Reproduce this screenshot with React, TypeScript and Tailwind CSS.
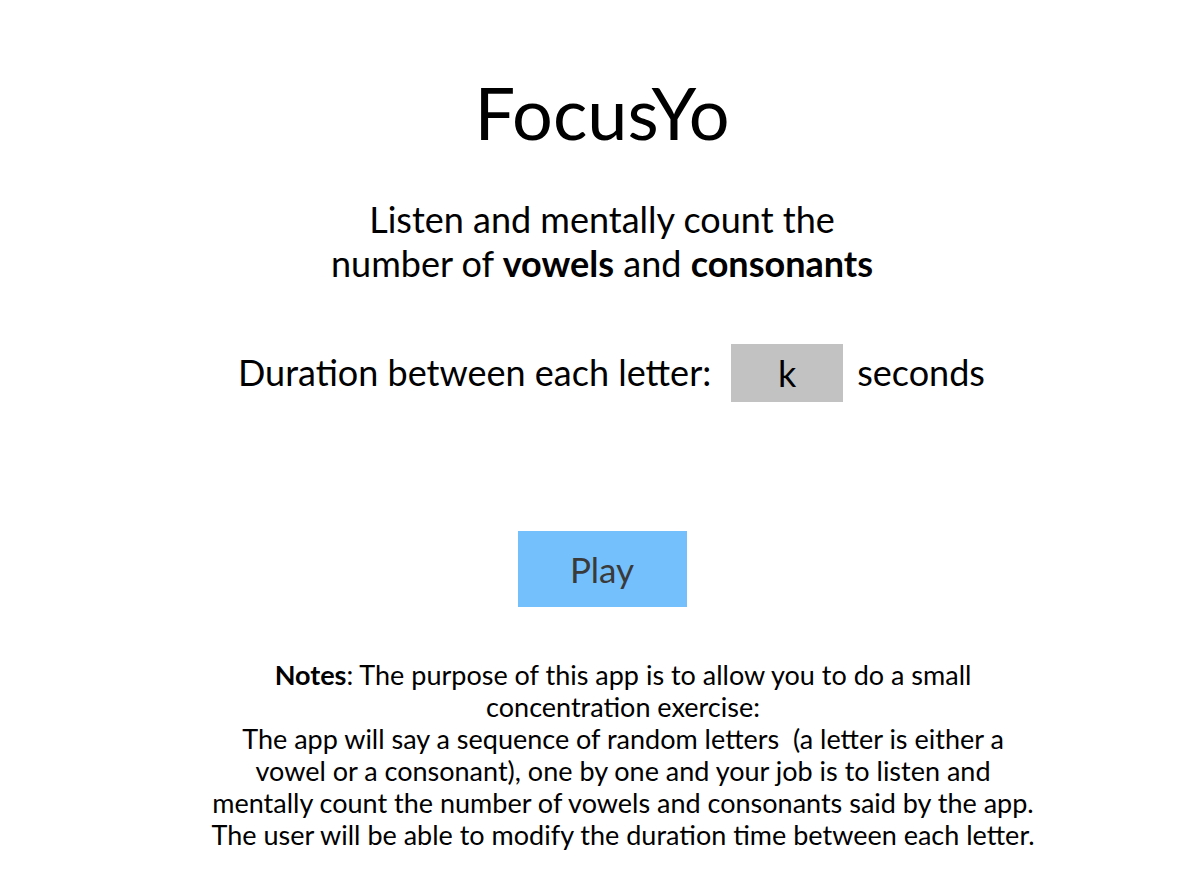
import { useState } from "react";

export default function App() {
    const [duration, setDuration] = useState("k");

    return (
        <div className="min-h-screen bg-white text-black font-['Lato',sans-serif] flex flex-col items-center">
            <h1 className="mt-[69px] text-[72px] leading-[1.2] font-normal">FocusYo</h1>

            <p className="mt-[43px] text-[36px] leading-[1.2] text-center">
                Listen and mentally count the
                <br />
                number of <b>vowels</b> and <b>consonants</b>
            </p>

            <div className="mt-[59px] ml-[19px] flex items-center text-[36px] leading-[1.2]">
                <span>Duration between each letter:</span>
                <input
                    value={duration}
                    onChange={(e) => setDuration(e.target.value)}
                    className="ml-5 mr-[14px] w-[112px] h-[58px] bg-[#c2c2c2] text-center outline-none"
                />
                <span>seconds</span>
            </div>

            <button className="mt-[129px] w-[169px] h-[76px] bg-[#74c0fc] text-[#3a3a3a] text-[35px]">Play</button>

            <div className="mt-[52px] ml-[42px] w-[828px] text-center text-[27px] leading-[32px]">
                <b>Notes</b>: The purpose of this app is to allow you to do a small concentration exercise:
                <br />
                The app will say a sequence of random letters&nbsp; (a letter is either a vowel or a consonant), one by one
                and your job is to listen and mentally count the number of vowels and consonants said by the app. The user
                will be able to modify the duration time between each letter.
            </div>
        </div>
    );
}
